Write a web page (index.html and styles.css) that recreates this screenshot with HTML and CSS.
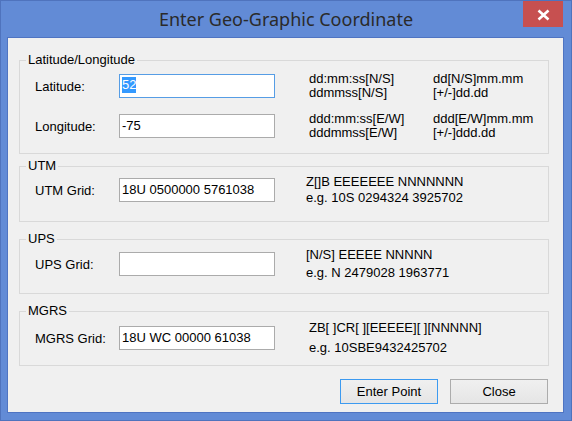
FILE: index.html
```html
<!DOCTYPE html>
<html>
<head>
<meta charset="utf-8">
<link rel="stylesheet" href="styles.css">
</head>
<body>
<div class="window">
  <div class="titlebar">
    <div class="title">Enter Geo-Graphic Coordinate</div>
    <div class="close">
      <svg width="40" height="26" viewBox="0 0 40 26"><path d="M15.5 9.5 L25.5 18.5 M25.5 9.5 L15.5 18.5" stroke="#fff" stroke-width="2.6" fill="none"/></svg>
    </div>
  </div>
  <div class="client">
    <fieldset class="group group-latlon">
      <legend>Latitude/Longitude</legend>
      <div class="rows rows-latlon">
        <div class="label">Latitude:</div>
        <div class="field focused"><span class="sel">52</span></div>
        <div class="hint hint-2col lh-14">
          <span>dd:mm:ss[N/S]</span><span>dd[N/S]mm.mm</span>
          <span>ddmmss[N/S]</span><span>[+/-]dd.dd</span>
        </div>
        <div class="label">Longitude:</div>
        <div class="field">-75</div>
        <div class="hint hint-2col lh-14">
          <span>ddd:mm:ss[E/W]</span><span>ddd[E/W]mm.mm</span>
          <span>dddmmss[E/W]</span><span>[+/-]ddd.dd</span>
        </div>
      </div>
    </fieldset>
    <fieldset class="group group-utm">
      <legend>UTM</legend>
      <div class="rows">
        <div class="label">UTM Grid:</div>
        <div class="field">18U 0500000 5761038</div>
        <div class="hint hint-near lh-165">
          <div>Z[]B EEEEEEE NNNNNNN</div>
          <div>e.g. 10S 0294324 3925702</div>
        </div>
      </div>
    </fieldset>
    <fieldset class="group group-ups">
      <legend>UPS</legend>
      <div class="rows">
        <div class="label">UPS Grid:</div>
        <div class="field"></div>
        <div class="hint hint-near lh-18">
          <div>[N/S] EEEEE NNNNN</div>
          <div>e.g. N 2479028 1963771</div>
        </div>
      </div>
    </fieldset>
    <fieldset class="group group-mgrs">
      <legend>MGRS</legend>
      <div class="rows">
        <div class="label">MGRS Grid:</div>
        <div class="field">18U WC 00000 61038</div>
        <div class="hint lh-205">
          <div>ZB[&nbsp;]CR[&nbsp;][EEEEE][&nbsp;][NNNNN]</div>
          <div>e.g. 10SBE9432425702</div>
        </div>
      </div>
    </fieldset>
    <div class="buttons">
      <div class="btn btn-default">Enter Point</div>
      <div class="btn">Close</div>
    </div>
  </div>
</div>
</body>
</html>
```
FILE: styles.css
```css
html, body {
  margin: 0;
  padding: 0;
  background: #628bd6;
}

.window {
  width: 572px;
  height: 421px;
  box-sizing: border-box;
  border: 1px solid #4f73bd;
  background: #628bd6;
  display: flex;
  flex-direction: column;
}

.titlebar {
  height: 36px;
  flex: none;
  display: grid;
  grid-template-columns: 1fr auto 1fr;
}

.title {
  grid-column: 2;
  align-self: start;
  margin-top: 6px;
  font-family: "Noto Sans", "Open Sans", sans-serif;
  font-size: 18px;
  line-height: 24px;
  color: #2a2a2a;
  white-space: nowrap;
}

.close {
  grid-column: 3;
  justify-self: end;
  align-self: start;
  margin-right: 8px;
  width: 40px;
  height: 26px;
  background: #c75050;
}

.close svg {
  display: block;
}

.client {
  flex: 1;
  margin: 0 7px 7px 6px;
  border: 1px solid #4f74c2;
  background: #f0f0f0;
  padding: 0 14px 0 11px;
  font-family: "Liberation Sans", Arial, sans-serif;
  font-size: 13px;
  color: #000;
}

.group {
  margin: 0;
  padding: 0;
  border: 1px solid #d9d9d9;
  min-width: 0;
}

.group legend {
  margin-left: 6px;
  padding: 0 2px;
  line-height: 14px;
  font-size: 13px;
}

.rows {
  display: grid;
  grid-template-columns: 84px 156px 1fr;
  grid-auto-rows: 24px;
  align-items: center;
  padding-left: 15px;
}

.rows-latlon {
  row-gap: 16px;
}

.group-latlon {
  margin-top: 15px;
  padding-top: 7px;
  padding-bottom: 15px;
}

.group-utm {
  margin-top: 5px;
  padding-top: 5px;
  padding-bottom: 19px;
}

.group-ups {
  margin-top: 10px;
  padding-top: 6px;
  padding-bottom: 17px;
}

.group-mgrs {
  margin-top: 10px;
  padding-top: 8px;
  padding-bottom: 15px;
}

.label {
  white-space: nowrap;
}

.field {
  height: 24px;
  box-sizing: border-box;
  border: 1px solid #ababab;
  background: #fff;
  padding: 0 2px;
  line-height: 22px;
  white-space: nowrap;
  overflow: hidden;
}

.field.focused {
  border-color: #569de5;
}

.sel {
  display: inline-block;
  vertical-align: top;
  margin-top: 2px;
  line-height: 16px;
  background: #3399ff;
  color: #fff;
}

.hint {
  margin-left: 34px;
  white-space: nowrap;
}

.hint-near {
  margin-left: 31px;
}

.hint-2col {
  display: grid;
  grid-template-columns: 124px auto;
}

.lh-14 { line-height: 14px; }
.lh-165 { line-height: 16.5px; }
.lh-18 { line-height: 18px; }
.lh-205 { line-height: 20.5px; }

.buttons {
  display: flex;
  justify-content: flex-end;
  gap: 12px;
  margin-top: 13px;
  margin-right: 1px;
}

.btn {
  width: 98px;
  height: 25px;
  box-sizing: border-box;
  border: 1px solid #acacac;
  background: linear-gradient(#f0f0f0, #e5e5e5);
  text-align: center;
  line-height: 23px;
}

.btn-default {
  border-color: #3c9af0;
}
```
